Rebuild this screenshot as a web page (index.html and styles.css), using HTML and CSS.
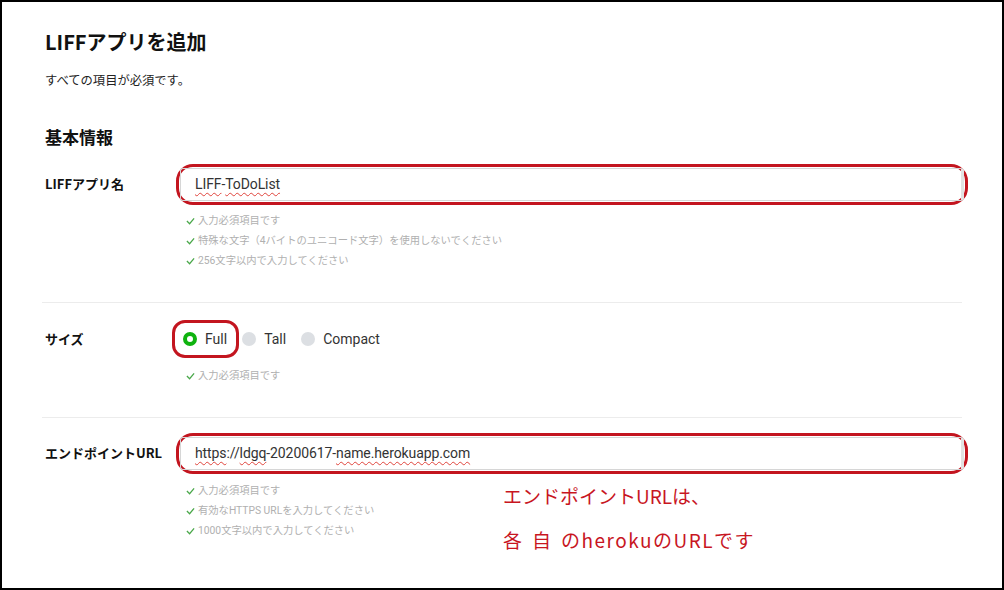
FILE: index.html
```html
<!DOCTYPE html>
<html lang="ja">
<head>
<meta charset="utf-8">
<title>LIFFアプリを追加</title>
<link rel="stylesheet" href="styles.css">
</head>
<body>
<div class="frame">
  <div class="page">
    <h1 class="title">LIFFアプリを追加</h1>
    <p class="subtitle">すべての項目が必須です。</p>
    <h2 class="section">基本情報</h2>

    <div class="row row-first">
      <div class="label">LIFFアプリ名</div>
      <div class="field">
        <div class="mark-box">
          <div class="input"><span class="spell">LIFF</span>-<span class="spell">ToDoList</span></div>
        </div>
        <ul class="hints">
          <li><svg class="check" viewBox="0 0 10 8"><polyline points="1,4 4,7 9,1"/></svg>入力必須項目です</li>
          <li><svg class="check" viewBox="0 0 10 8"><polyline points="1,4 4,7 9,1"/></svg>特殊な文字（4バイトのユニコード文字）を使用しないでください</li>
          <li><svg class="check" viewBox="0 0 10 8"><polyline points="1,4 4,7 9,1"/></svg>256文字以内で入力してください</li>
        </ul>
      </div>
    </div>

    <div class="row row-size">
      <div class="label">サイズ</div>
      <div class="field">
        <div class="radios">
          <div class="radio-mark">
            <span class="radio radio-on"></span><span class="radio-text">Full</span>
          </div>
          <div class="radio-item">
            <span class="radio"></span><span class="radio-text">Tall</span>
          </div>
          <div class="radio-item">
            <span class="radio"></span><span class="radio-text">Compact</span>
          </div>
        </div>
        <ul class="hints hints-size">
          <li><svg class="check" viewBox="0 0 10 8"><polyline points="1,4 4,7 9,1"/></svg>入力必須項目です</li>
        </ul>
      </div>
    </div>

    <div class="row row-url">
      <div class="label">エンドポイントURL</div>
      <div class="field">
        <div class="mark-box">
          <div class="input"><span class="spell">https</span>://<span class="spell">ldgq</span>-20200617-<span class="spell">name.herokuapp.com</span></div>
        </div>
        <div class="hint-row">
          <ul class="hints hints-url">
            <li><svg class="check" viewBox="0 0 10 8"><polyline points="1,4 4,7 9,1"/></svg>入力必須項目です</li>
            <li><svg class="check" viewBox="0 0 10 8"><polyline points="1,4 4,7 9,1"/></svg>有効なHTTPS URLを入力してください</li>
            <li><svg class="check" viewBox="0 0 10 8"><polyline points="1,4 4,7 9,1"/></svg>1000文字以内で入力してください</li>
          </ul>
          <div class="note">
            <div>エンドポイントURLは、</div>
            <div class="note-line2"><span class="wide">各自</span>のherokuのURLです</div>
          </div>
        </div>
      </div>
    </div>
  </div>
</div>
</body>
</html>
```

FILE: styles.css
```css
* {
  box-sizing: border-box;
}

html, body {
  margin: 0;
  padding: 0;
  background: #000;
}

body {
  font-family: "Roboto", "Noto Sans CJK JP", sans-serif;
  color: #222;
}

.frame {
  width: 1004px;
  height: 590px;
  border: 2px solid #000;
  background: #fff;
  overflow: hidden;
}

.page {
  padding: 26px 0 0 40px;
  width: 962px;
}

.title {
  margin: 0 0 0 3px;
  font-family: "Noto Sans CJK JP", sans-serif;
  font-size: 20px;
  line-height: 28px;
  font-weight: 700;
  color: #111;
}

.subtitle {
  margin: 15px 0 0 3px;
  font-family: "Noto Sans CJK JP", sans-serif;
  font-size: 12.3px;
  line-height: 18px;
  color: #222;
}

.section {
  margin: 38px 0 0 3px;
  font-family: "Noto Sans CJK JP", sans-serif;
  font-size: 17px;
  line-height: 20px;
  font-weight: 700;
  color: #111;
}

.row {
  display: flex;
  align-items: flex-start;
  width: 920px;
  padding: 17px 0 31px;
  border-bottom: 1px solid #ececec;
}

.row-url {
  padding-top: 15px;
}

.label {
  flex: none;
  width: 138px;
  padding-left: 3px;
  font-family: "Noto Sans CJK JP", sans-serif;
  font-size: 13px;
  font-weight: 700;
  color: #111;
  height: 41px;
  line-height: 39px;
}

.row-size .label {
  height: 38px;
  line-height: 37px;
}

.field {
  flex: none;
  width: 784px;
}

.mark-box {
  margin: 0 -4px;
  border: 3px solid #c3151f;
  border-radius: 17px;
  padding: 1px;
}

.input {
  height: 33px;
  border: 1px solid #d6d6d6;
  border-right: 3px solid #e2e2e2;
  border-radius: 3px;
  padding: 0 14px;
  font-family: "Roboto", sans-serif;
  font-size: 14px;
  letter-spacing: -0.1px;
  line-height: 31px;
  color: #333;
  white-space: nowrap;
}

.spell {
  text-decoration: underline wavy #e0443c;
  text-decoration-thickness: 1px;
  text-underline-offset: 3px;
}

.hints {
  list-style: none;
  margin: 6px 0 0;
  padding: 0 0 0 6px;
  font-family: "Roboto", "Noto Sans CJK JP", sans-serif;
  font-size: 10.3px;
  line-height: 20px;
  color: #b0b0b0;
}

.hints li {
  display: flex;
  align-items: center;
  white-space: nowrap;
}

.check {
  width: 9px;
  height: 8px;
  margin-right: 3px;
  flex: none;
}

.check polyline {
  fill: none;
  stroke: #4aa84a;
  stroke-width: 1.4;
}

.hints-size {
  margin-top: 8px;
}

.radios {
  display: flex;
  align-items: center;
  margin-left: -8px;
}

.radio-mark {
  display: flex;
  align-items: center;
  height: 38px;
  border: 3px solid #c3151f;
  border-radius: 13px;
  padding: 0 9px 0 8px;
}

.radio-item {
  display: flex;
  align-items: center;
  margin-left: 3px;
}

.radio-item + .radio-item {
  margin-left: 15px;
}

.radio {
  width: 14px;
  height: 14px;
  border-radius: 50%;
  background: #dcdfe3;
  flex: none;
}

.radio-on {
  background: #fff;
  border: 4px solid #0fb30f;
}

.radio-text {
  margin-left: 8px;
  font-family: "Roboto", sans-serif;
  font-size: 14px;
  line-height: 20px;
  color: #333;
}

.hint-row {
  display: flex;
  align-items: flex-start;
}

.hints-url {
  flex: none;
  width: 323px;
  margin-top: 7px;
}

.note {
  font-family: "Noto Sans CJK JP", sans-serif;
  font-size: 19px;
  line-height: 44px;
  color: #c8161f;
  white-space: nowrap;
}

.note-line2 {
  letter-spacing: 1.5px;
}

.wide {
  letter-spacing: 10px;
}
```
